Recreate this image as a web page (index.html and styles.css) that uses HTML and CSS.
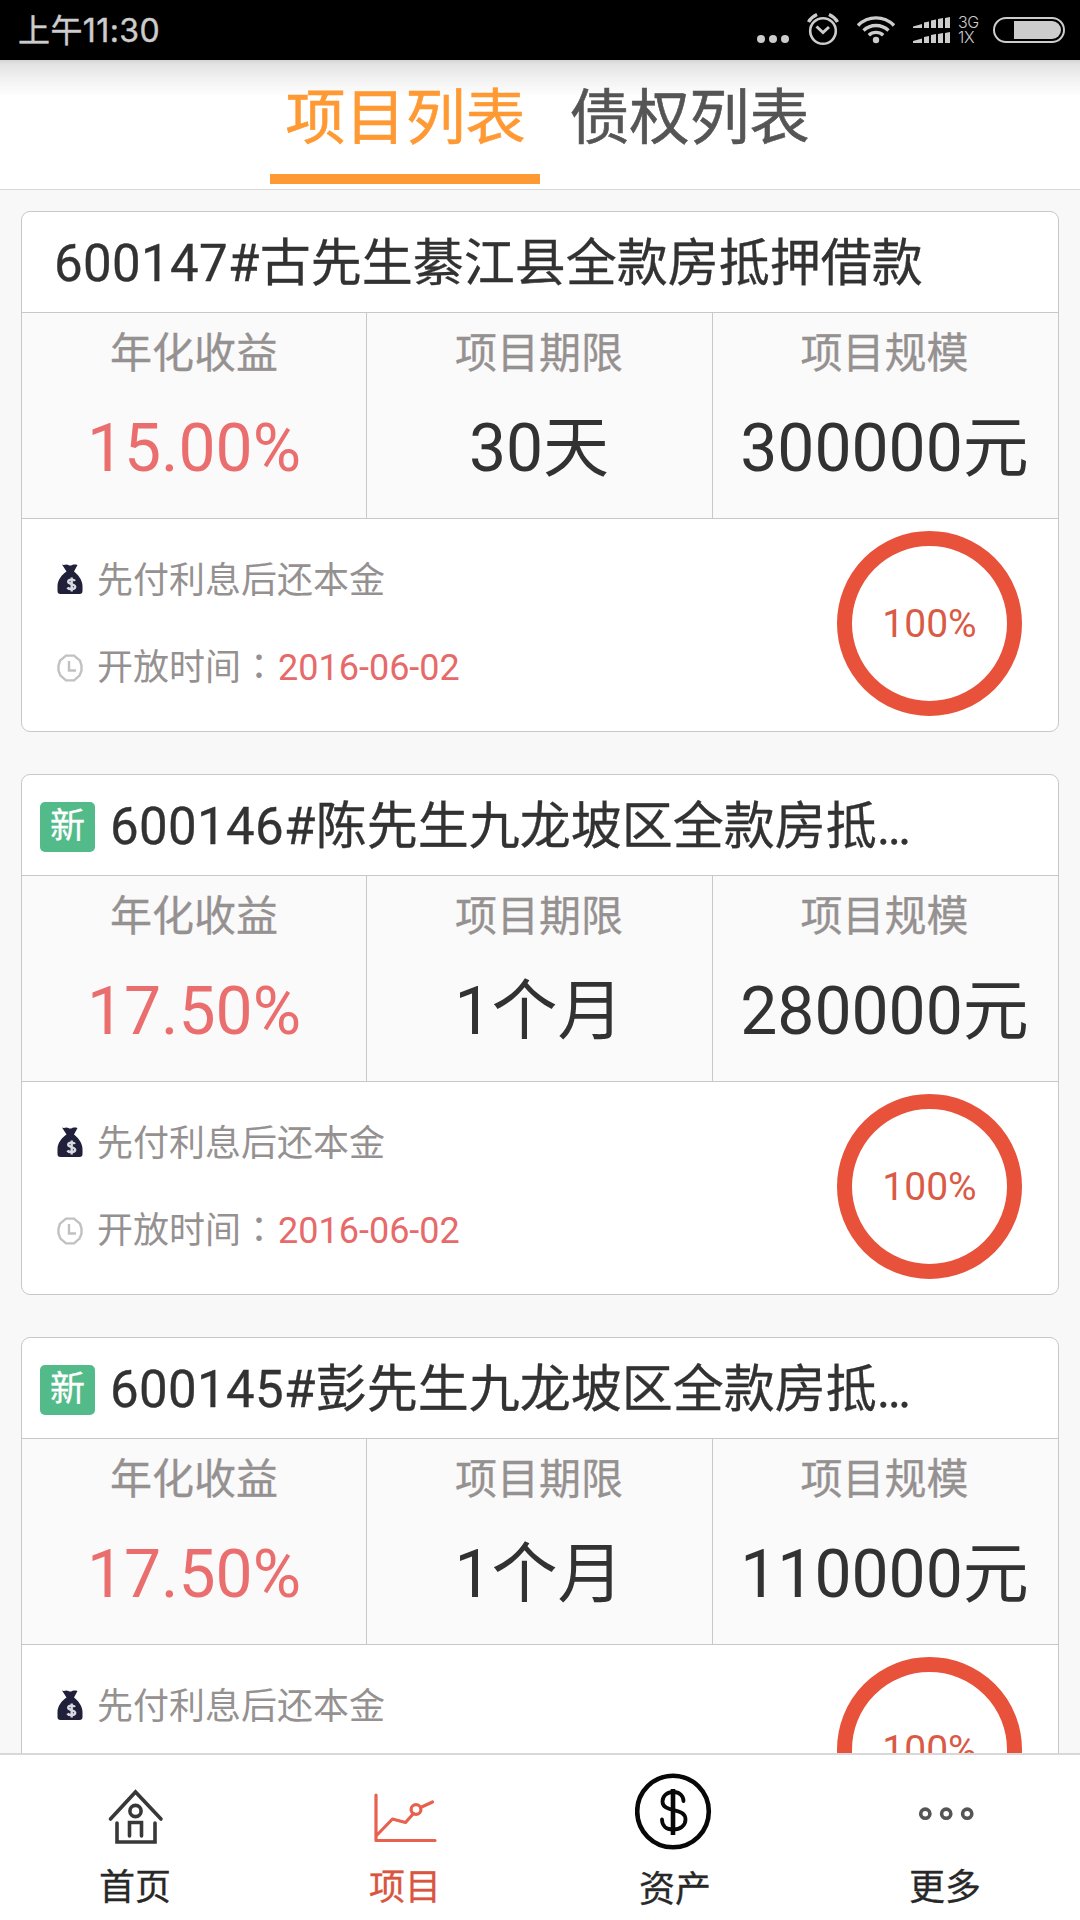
FILE: index.html
```html
<!DOCTYPE html>
<html lang="zh-CN">
<head>
<meta charset="utf-8">
<title>项目列表</title>
<link rel="stylesheet" href="styles.css">
</head>
<body>
<svg class="defs" width="0" height="0" aria-hidden="true">
  <symbol id="bag" viewBox="0 0 26 32">
    <path fill="#20203a" d="M5 1.5c2 1 3 0 4.500 0s3 1.500 4.500 1 3-1.500 6.500-.5l-3.500 6.500c4 3 8.500 8.500 8.500 14.500v5c0 2-1 3-3 3h-19C1.500 31 .5 30 .5 28v-5c0-6 4.500-11.500 9-14.500z"/>
    <path fill="none" stroke="#d9d9e2" stroke-width="2.400" d="M18 17.800c-1-1.500-6.500-2-6.800.8-.2 3 7 2 7 5.200 0 3.200-6.500 2.800-7.800.7M14.700 14.500v14"/>
  </symbol>
  <symbol id="clock" viewBox="0 0 26 28">
    <path fill="none" stroke="#c2c0c0" stroke-width="2.400" d="M9 1.600h8l6 5 1.500 5v5l-2 5-5.500 4.800H9L3.500 21.600l-2-5v-5l1.500-5z"/>
    <path fill="none" stroke="#c2c0c0" stroke-width="2.400" d="M12 7v9.500h7"/>
  </symbol>
</svg>
<div class="screen">
  <header class="status">
    <div class="time">上午11:30</div>
    <div class="status-icons">
      <svg width="32" height="60" fill="#ccc"><circle cx="4" cy="39" r="4"/><circle cx="16" cy="39" r="4"/><circle cx="28" cy="39" r="4"/></svg>
      <svg class="wide-gap" width="32" height="60" fill="none" stroke="#ccc"><circle cx="16" cy="31" r="12.800" stroke-width="2.600"/><path stroke-width="3" d="M9.500 26.500l6.500 6 6-5.500"/><path stroke-width="3.400" d="M1.500 22c2-3.500 4-5.500 8.500-7.500M30.500 22c-2-3.500-4-5.500-8.500-7.500"/></svg>
      <svg class="wide-gap" width="38" height="60" fill="none" stroke="#ccc" stroke-width="3.400"><path d="M1 25.500a25 25 0 0 1 36 0M6.500 30.500a18 18 0 0 1 25 0M11.800 35.200a10.500 10.500 0 0 1 14.400 0"/><circle cx="19" cy="40" r="3.200" fill="#ccc" stroke="none"/></svg>
      <svg class="wide-gap" width="37" height="60" fill="#ccc"><path d="M0 28v-1.500l9-2.500v4zM11 28v-5.500l5-1V28zM18 28v-7.500l5-1V28zM25 28v-9l5-1v10zM32 28V18l5-1v11zM0 43v-2l9-2.500V43zM11 43v-6l5-1v7zM18 43v-8l5-1v9zM25 43v-9l5-1v10zM32 43V33l5-1v11z"/></svg>
      <div class="network"><span>3G</span><span>1X</span></div>
      <svg class="battery" width="72" height="60"><rect x="1" y="18" width="70" height="24" rx="12" fill="none" stroke="#ccc" stroke-width="2"/><path fill="#ccc" d="M21 21h38a9 9 0 0 1 0 18H21z"/></svg>
    </div>
  </header>
  <nav class="tabs">
    <div class="tab active">项目列表</div>
    <div class="tab">债权列表</div>
  </nav>
  <main class="list">
    <section class="card">
      <h2 class="title"><span class="code">600147#</span>古先生綦江县全款房抵押借款</h2>
      <div class="stats">
        <div class="stat"><span class="label">年化收益</span><span class="value rate">15.00%</span></div>
        <div class="stat"><span class="label">项目期限</span><span class="value">30天</span></div>
        <div class="stat"><span class="label">项目规模</span><span class="value">300000元</span></div>
      </div>
      <div class="detail">
        <div class="notes">
          <div class="note"><svg width="26" height="32"><use href="#bag"/></svg><span class="method">先付利息后还本金</span></div>
          <div class="note"><svg width="26" height="28"><use href="#clock"/></svg><span>开放时间<span class="colon" lang="zh-TW">：</span><span class="date">2016-06-02</span></span></div>
        </div>
        <div class="ring">100%</div>
      </div>
    </section>
    <section class="card">
      <h2 class="title new"><span class="badge">新</span><span class="code">600146#</span>陈先生九龙坡区全款房抵…</h2>
      <div class="stats">
        <div class="stat"><span class="label">年化收益</span><span class="value rate">17.50%</span></div>
        <div class="stat"><span class="label">项目期限</span><span class="value">1个月</span></div>
        <div class="stat"><span class="label">项目规模</span><span class="value">280000元</span></div>
      </div>
      <div class="detail">
        <div class="notes">
          <div class="note"><svg width="26" height="32"><use href="#bag"/></svg><span class="method">先付利息后还本金</span></div>
          <div class="note"><svg width="26" height="28"><use href="#clock"/></svg><span>开放时间<span class="colon" lang="zh-TW">：</span><span class="date">2016-06-02</span></span></div>
        </div>
        <div class="ring">100%</div>
      </div>
    </section>
    <section class="card">
      <h2 class="title new"><span class="badge">新</span><span class="code">600145#</span>彭先生九龙坡区全款房抵…</h2>
      <div class="stats">
        <div class="stat"><span class="label">年化收益</span><span class="value rate">17.50%</span></div>
        <div class="stat"><span class="label">项目期限</span><span class="value">1个月</span></div>
        <div class="stat"><span class="label">项目规模</span><span class="value">110000元</span></div>
      </div>
      <div class="detail">
        <div class="notes">
          <div class="note"><svg width="26" height="32"><use href="#bag"/></svg><span class="method">先付利息后还本金</span></div>
        </div>
        <div class="ring">100%</div>
      </div>
    </section>
  </main>
  <footer class="nav">
    <a class="item"><svg width="80" height="104" viewBox="95 1756 80 104" fill="none" stroke="#383838" stroke-width="3.600" stroke-linecap="round"><path d="M110.500 1819L135.500 1792l25.500 27M117 1823v19h38v-19M129.500 1836v-13.500h12V1836"/><circle cx="135.500" cy="1811" r="5.600"/></svg><span>首页</span></a>
    <a class="item current"><svg width="80" height="104" viewBox="366 1756 80 104" fill="none" stroke="#e8614f" stroke-width="3.200" stroke-linecap="round" stroke-linejoin="round"><path d="M377 1795v45.500h59M378 1835l15.500-16 13 3.500 8-9M421.500 1807.500l12-5.500"/><circle cx="417" cy="1809.500" r="4.900"/></svg><span>项目</span></a>
    <a class="item assets"><svg width="80" height="104" viewBox="635 1756 80 104" fill="none" stroke="#080808"><circle cx="673" cy="1811.500" r="35.800" stroke-width="4.600"/><path stroke-width="4.600" d="M673 1789v46"/><path stroke-width="3.800" stroke-linecap="round" d="M683.500 1801c0-5-4-9-10-9-6.500 0-11 4-11 9.500 0 12 23 5 23 18 0 6-5 10-12.500 10-7 0-11-4-11-10"/></svg><span>资产</span></a>
    <a class="item"><svg width="80" height="104" viewBox="905 1756 80 104" fill="none" stroke="#555" stroke-width="3.600"><circle cx="925.300" cy="1813.700" r="4.600"/><circle cx="946.200" cy="1813.700" r="4.600"/><circle cx="967.200" cy="1813.700" r="4.600"/></svg><span>更多</span></a>
  </footer>
</div>
</body>
</html>
```
FILE: styles.css
```css
* { box-sizing: border-box; }
body { margin: 0; font-family: Roboto, "Noto Sans CJK SC", sans-serif; color: #323232; background: #f8f8f8; }
svg { display: block; flex: none; }
.defs { position: absolute; }
.screen { width: 1080px; height: 1920px; display: flex; flex-direction: column; overflow: hidden; }

.status { flex: none; height: 60px; background: #000; color: #ccc; display: flex; justify-content: space-between; padding: 0 15px 0 18px; }
.time { font: 32px/61px Inter, "Noto Sans CJK SC", sans-serif; letter-spacing: 0.4px; -webkit-text-stroke: 0.4px currentColor; }
.status-icons { display: flex; }
.wide-gap { margin-left: 18px; }
.network { width: 20px; margin: 15px 15px 0 8px; display: flex; flex-direction: column; font: 300 16px/15px Inter, sans-serif; letter-spacing: -0.4px; }

.tabs { flex: none; height: 130px; display: flex; justify-content: center; background: linear-gradient(#d4d4d4, #e2e2e2 4px, #f0f0f0 17px, #fff 37px); border-bottom: 1px solid #d9d9d9; }
.tab { width: 270px; height: 124px; padding-left: 29px; font-size: 60px; line-height: 118px; text-align: center; white-space: nowrap; color: #555; border-bottom: 10px solid transparent; -webkit-text-stroke: 0.6px currentColor; }
.tab.active { padding-left: 1px; color: #ff9933; border-color: #ff9933; }

.list { flex: 1; min-height: 0; overflow: hidden; padding: 21px 21px 0; display: flex; flex-direction: column; gap: 42px; }
.card { flex: none; height: 521px; border: 1px solid #c8c8c8; border-radius: 9px; background: #fff; overflow: hidden; }
.title { margin: 0; height: 100px; padding: 4px 0 0 32px; display: flex; align-items: center; font-size: 51px; font-weight: 400; line-height: 96px; white-space: nowrap; -webkit-text-stroke: 0.3px currentColor; }
.title.new { padding-left: 18px; }
.code { letter-spacing: 0.35px; }
.badge { width: 55px; height: 50px; margin-right: 15px; border-radius: 5px; background: #52bb89; color: #fff; font-size: 35px; line-height: 50px; text-align: center; }
.stats { height: 207px; display: grid; grid-template-columns: 344px 346px 1fr; border: solid #c8c8c8; border-width: 1px 0; background: #fafafa; }
.stat { display: flex; flex-direction: column; align-items: center; border-left: 1px solid #c8c8c8; white-space: nowrap; }
.stat:first-child { border-left: 0; }
.stat:nth-child(2) { padding-right: 1px; }
.stat:nth-child(3) { padding-right: 2px; }
.label { margin-top: 10px; font-size: 42px; line-height: 62px; color: #969191; -webkit-text-stroke: 0.3px currentColor; }
.value { margin-top: 24px; font-size: 66px; line-height: 80px; }
.rate { color: #eb6e6e; }
.detail { display: flex; justify-content: space-between; padding: 12px 36px 0 35px; }
.notes { padding-top: 22px; display: flex; flex-direction: column; gap: 37px; }
.note { height: 52px; display: flex; align-items: center; gap: 14px; font-size: 36px; line-height: 52px; color: #969191; }
.method { padding-top: 3px; }
.colon { display: inline-block; width: 37px; font-family: "Noto Sans CJK TC", sans-serif; line-height: 1; }
.date { color: #e66a6a; }
.ring { width: 185px; height: 185px; border: 15px solid #e8523a; border-radius: 50%; font-size: 39px; line-height: 157px; text-align: center; color: #d95b45; }

.nav { flex: none; height: 167px; display: flex; border-top: 2px solid #d8d8d8; background: #fff; }
.item { flex: 1; padding-top: 1px; display: flex; flex-direction: column; align-items: center; font-size: 36px; line-height: 56px; color: #282828; }
.item span { -webkit-text-stroke: 0.3px currentColor; }
.item.current { color: #d9553f; }
.item.assets span { padding-top: 2px; }
```
